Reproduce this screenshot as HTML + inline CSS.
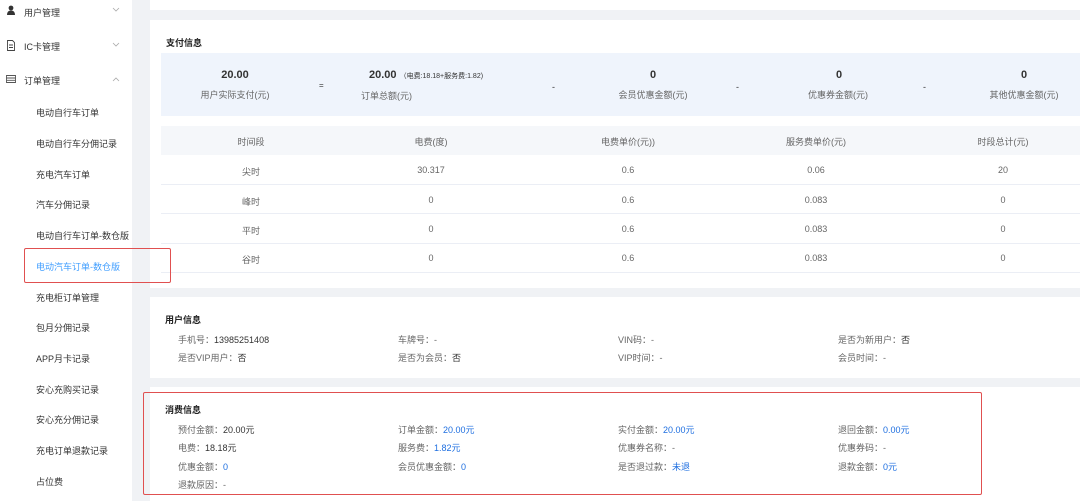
<!DOCTYPE html><html><head><meta charset="utf-8"><style>
*{margin:0;padding:0;box-sizing:border-box}
body{width:1080px;height:501px;overflow:hidden;background:#f0f2f5;font-family:"Liberation Sans","Noto Sans CJK SC",sans-serif;font-size:9px;color:#333;position:relative}
.a{position:absolute;white-space:nowrap}
.side{position:absolute;left:0;top:0;width:132px;height:501px;background:#fff}
.p{position:absolute;left:150px;right:0;background:#fff}
.c{text-align:center;transform:translateX(-50%)}
.g{color:#666}
.b{color:#1f6fe0}
.h{font-weight:bold;color:#222;font-size:9px}
svg{position:absolute}
</style></head><body>
<div class="side">
<svg style="left:6px;top:5px" width="10" height="10" viewBox="0 0 10 10"><circle cx="5" cy="3" r="2.4" fill="#333"/><path d="M1 10 Q1 5.5 5 5.5 Q9 5.5 9 10Z" fill="#333"/></svg>
<div class="a" style="left:24px;top:6px">用户管理</div>
<svg style="left:112px;top:7px" width="8" height="5" viewBox="0 0 8 5"><path d="M1 1 L4 4 L7 1" stroke="#aaa" fill="none" stroke-width="0.8"/></svg>
<svg style="left:6px;top:40px" width="10" height="11" viewBox="0 0 10 11"><path d="M1.5 .5 H6.5 L8.5 2.5 V10.5 H1.5Z M3 5 H7 M3 7.5 H7" stroke="#444" fill="none" stroke-width="0.9"/></svg>
<div class="a" style="left:24px;top:40px">IC卡管理</div>
<svg style="left:112px;top:42px" width="8" height="5" viewBox="0 0 8 5"><path d="M1 1 L4 4 L7 1" stroke="#aaa" fill="none" stroke-width="0.8"/></svg>
<svg style="left:6px;top:74px" width="10" height="10" viewBox="0 0 10 10"><path d="M.5 1.5 H9.5 V8.5 H.5Z M.5 4 H9.5 M.5 6.3 H9.5" stroke="#555" fill="none" stroke-width="0.9"/></svg>
<div class="a" style="left:24px;top:74px">订单管理</div>
<svg style="left:112px;top:77px" width="8" height="5" viewBox="0 0 8 5"><path d="M1 4 L4 1 L7 4" stroke="#aaa" fill="none" stroke-width="0.8"/></svg>
<div class="a" style="left:36px;top:106px">电动自行车订单</div>
<div class="a" style="left:36px;top:137px">电动自行车分佣记录</div>
<div class="a" style="left:36px;top:168px">充电汽车订单</div>
<div class="a" style="left:36px;top:198px">汽车分佣记录</div>
<div class="a" style="left:36px;top:229px">电动自行车订单-数仓版</div>
<div class="a b" style="left:36px;top:260px;color:#409eff">电动汽车订单-数仓版</div>
<div class="a" style="left:36px;top:291px">充电柜订单管理</div>
<div class="a" style="left:36px;top:321px">包月分佣记录</div>
<div class="a" style="left:36px;top:352px">APP月卡记录</div>
<div class="a" style="left:36px;top:383px">安心充购买记录</div>
<div class="a" style="left:36px;top:413px">安心充分佣记录</div>
<div class="a" style="left:36px;top:444px">充电订单退款记录</div>
<div class="a" style="left:36px;top:475px">占位费</div>
</div>
<div class="p" style="top:0;height:10px"></div>
<div class="p" style="top:20px;height:268px">
<div class="a h" style="left:16px;top:16px">支付信息</div>
<div class="a" style="left:11px;top:33px;right:0;height:63px;background:#eff4fc"></div>
<div class="a" style="left:11px;top:106px;right:0;height:29px;background:#f5f7fa"></div>
<div class="a" style="left:11px;top:164px;right:0;height:1px;background:#ebeef5"></div>
<div class="a" style="left:11px;top:193px;right:0;height:1px;background:#ebeef5"></div>
<div class="a" style="left:11px;top:223px;right:0;height:1px;background:#ebeef5"></div>
<div class="a" style="left:11px;top:252px;right:0;height:1px;background:#ebeef5"></div>
</div>
<div class="a" style="left:24px;top:248px;width:147px;height:35px;border:1.5px solid #e05050;border-radius:2px"></div>
<!-- summary -->
<div class="a c" style="left:235px;top:69px;font-size:11px;font-weight:bold">20.00</div>
<div class="a c g" style="left:235px;top:88px">用户实际支付(元)</div>
<div class="a" style="left:319px;top:81px;font-size:8px">=</div>
<div class="a" style="left:369px;top:69px;font-size:11px;font-weight:bold">20.00 <span style="font-size:7px;font-weight:normal">（电费:18.18+服务费:1.82)</span></div>
<div class="a g" style="left:361px;top:89px">订单总额(元)</div>
<div class="a" style="left:552px;top:82px">-</div>
<div class="a c" style="left:653px;top:69px;font-size:11px;font-weight:bold">0</div>
<div class="a c g" style="left:653px;top:88px">会员优惠金额(元)</div>
<div class="a" style="left:736px;top:82px">-</div>
<div class="a c" style="left:839px;top:69px;font-size:11px;font-weight:bold">0</div>
<div class="a c g" style="left:838px;top:88px">优惠券金额(元)</div>
<div class="a" style="left:923px;top:82px">-</div>
<div class="a c" style="left:1024px;top:69px;font-size:11px;font-weight:bold">0</div>
<div class="a c g" style="left:1024px;top:88px">其他优惠金额(元)</div>
<!-- table -->
<div class="a c g" style="left:251px;top:135px">时间段</div>
<div class="a c g" style="left:431px;top:135px">电费(度)</div>
<div class="a c g" style="left:628px;top:135px">电费单价(元))</div>
<div class="a c g" style="left:816px;top:135px">服务费单价(元)</div>
<div class="a c g" style="left:1003px;top:135px">时段总计(元)</div>
<div class="a c g" style="left:251px;top:165px">尖时</div><div class="a c g" style="left:431px;top:165px">30.317</div><div class="a c g" style="left:628px;top:165px">0.6</div><div class="a c g" style="left:816px;top:165px">0.06</div><div class="a c g" style="left:1003px;top:165px">20</div>
<div class="a c g" style="left:251px;top:195px">峰时</div><div class="a c g" style="left:431px;top:195px">0</div><div class="a c g" style="left:628px;top:195px">0.6</div><div class="a c g" style="left:816px;top:195px">0.083</div><div class="a c g" style="left:1003px;top:195px">0</div>
<div class="a c g" style="left:251px;top:224px">平时</div><div class="a c g" style="left:431px;top:224px">0</div><div class="a c g" style="left:628px;top:224px">0.6</div><div class="a c g" style="left:816px;top:224px">0.083</div><div class="a c g" style="left:1003px;top:224px">0</div>
<div class="a c g" style="left:251px;top:253px">谷时</div><div class="a c g" style="left:431px;top:253px">0</div><div class="a c g" style="left:628px;top:253px">0.6</div><div class="a c g" style="left:816px;top:253px">0.083</div><div class="a c g" style="left:1003px;top:253px">0</div>
<!-- user -->
<div class="p" style="top:297px;height:81px"></div>
<div class="a h" style="left:165px;top:313px">用户信息</div>
<div class="a g" style="left:178px;top:333px">手机号：<span style="color:#333">13985251408</span></div>
<div class="a g" style="left:398px;top:333px">车牌号：-</div>
<div class="a g" style="left:618px;top:333px">VIN码：-</div>
<div class="a g" style="left:838px;top:333px">是否为新用户：<span style="color:#333">否</span></div>
<div class="a g" style="left:178px;top:351px">是否VIP用户：<span style="color:#333">否</span></div>
<div class="a g" style="left:398px;top:351px">是否为会员：<span style="color:#333">否</span></div>
<div class="a g" style="left:618px;top:351px">VIP时间：-</div>
<div class="a g" style="left:838px;top:351px">会员时间：-</div>
<!-- consume -->
<div class="p" style="top:387px;height:114px"></div>
<div class="a h" style="left:165px;top:403px">消费信息</div>
<div class="a g" style="left:178px;top:423px">预付金额：<span style="color:#333">20.00元</span></div>
<div class="a g" style="left:398px;top:423px">订单金额：<span class="b">20.00元</span></div>
<div class="a g" style="left:618px;top:423px">实付金额：<span class="b">20.00元</span></div>
<div class="a g" style="left:838px;top:423px">退回金额：<span class="b">0.00元</span></div>
<div class="a g" style="left:178px;top:441px">电费：<span style="color:#333">18.18元</span></div>
<div class="a g" style="left:398px;top:441px">服务费：<span class="b">1.82元</span></div>
<div class="a g" style="left:618px;top:441px">优惠券名称：-</div>
<div class="a g" style="left:838px;top:441px">优惠券码：-</div>
<div class="a g" style="left:178px;top:460px">优惠金额：<span class="b">0</span></div>
<div class="a g" style="left:398px;top:460px">会员优惠金额：<span class="b">0</span></div>
<div class="a g" style="left:618px;top:460px">是否退过款：<span class="b">未退</span></div>
<div class="a g" style="left:838px;top:460px">退款金额：<span class="b">0元</span></div>
<div class="a g" style="left:178px;top:478px">退款原因：-</div>
<div class="a" style="left:143px;top:392px;width:839px;height:103px;border:1.5px solid #e05050;border-radius:2px"></div>
</body></html>
